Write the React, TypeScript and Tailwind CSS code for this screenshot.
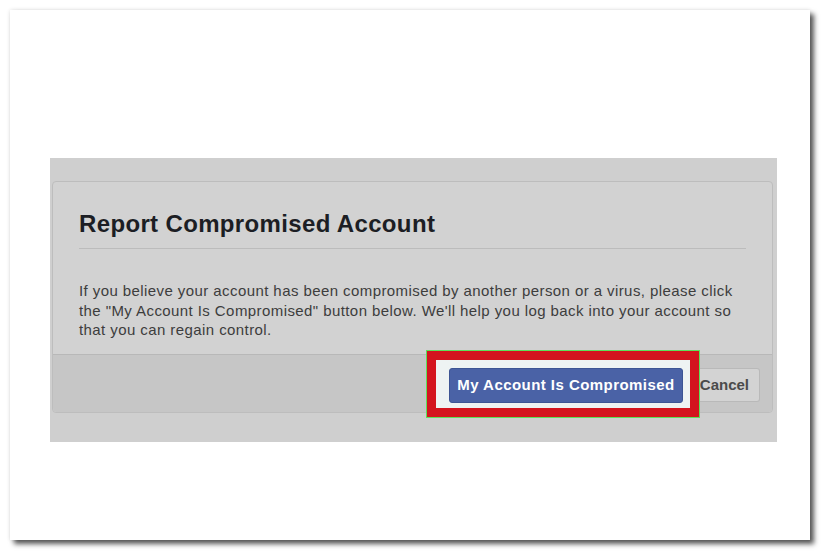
export default function App() {
  return (
    <div className="w-[821px] h-[551px] bg-white pt-[10px] pl-[10px] font-['Liberation_Sans',Arial,sans-serif]">
      <div className="w-[800px] h-[530px] bg-white shadow-[0_0_4px_rgba(0,0,0,0.12),4px_4px_5px_rgba(0,0,0,0.65)] pt-[148px] pl-[40px]">
        <div className="w-[727px] h-[284px] bg-[#cfcfcf] pt-[23px] pl-[2px]">
          <div className="w-[721px] h-[232px] rounded-[4px] border border-[#bdbdbd] bg-[#d2d2d2] flex flex-col overflow-visible">
            <div className="px-[26px] pt-[28px]">
              <h1 className="text-[24px] leading-[28px] tracking-[0.35px] font-bold text-[#1c1e24] pb-[10px] border-b border-[#bcbcbc]">
                Report Compromised Account
              </h1>
              <p className="text-[15px] leading-[19.5px] tracking-[0.42px] text-[#3d3d3d] pt-[32px] pb-[12px]">
                If you believe your account has been compromised by another person or a virus, please click the "My Account Is Compromised" button below. We'll help you log back into your account so that you can regain control.
              </p>
            </div>
            <div className="mt-auto h-[58px] bg-[#c6c6c6] border-t border-[#b8b8b8] rounded-b-[4px] flex items-start justify-end pr-[12px] pt-[-4px]">
              <div className="-mt-[4px] outline outline-1 outline-[#5ee05a] border-[9px] border-[#d4141e] bg-[#eef3f3] pl-[13px] pr-[7px] pt-[8px] pb-[5px] flex relative z-10">
                <button className="h-[35px] w-[234px] bg-[#4a62a6] rounded-[3px] border border-[#3d5594] text-white font-bold text-[15px] tracking-[0.45px]">
                  My Account Is Compromised
                </button>
              </div>
              <button className="mt-[13px] h-[34px] w-[61px] bg-[#d3d3d3] border border-l-0 border-[#b9b9b9] rounded-r-[3px] text-[#4b4b4b] font-bold text-[15px] text-right pr-[10px]">
                Cancel
              </button>
            </div>
          </div>
        </div>
      </div>
    </div>
  );
}
